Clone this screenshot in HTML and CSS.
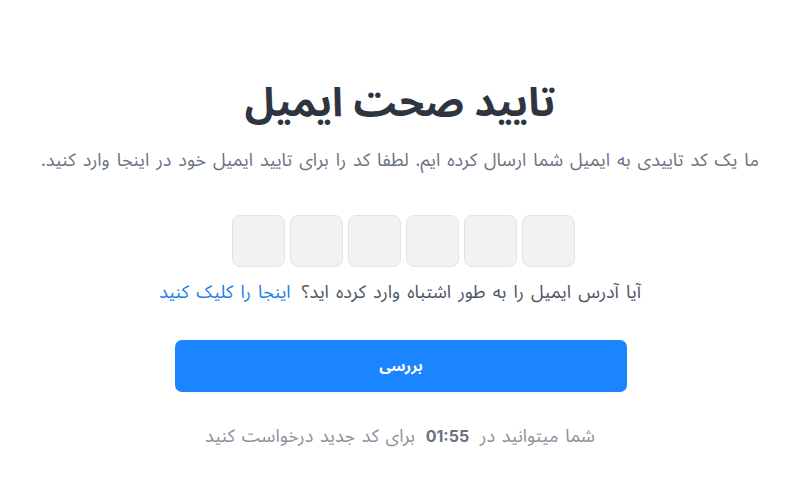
FILE: index.html
```html
<!DOCTYPE html>
<html lang="fa" dir="rtl">
<head>
<meta charset="utf-8">
<link rel="stylesheet" href="styles.css">
</head>
<body>
<main class="page">
  <h1 class="title">تایید صحت ایمیل</h1>
  <p class="subtitle">ما یک کد تاییدی به ایمیل شما ارسال کرده ایم. لطفا کد را برای تایید ایمیل خود در اینجا وارد کنید.</p>
  <div class="code" dir="ltr">
    <input class="digit" maxlength="1">
    <input class="digit" maxlength="1">
    <input class="digit" maxlength="1">
    <input class="digit" maxlength="1">
    <input class="digit" maxlength="1">
    <input class="digit" maxlength="1">
  </div>
  <p class="wrong">آیا آدرس ایمیل را به طور اشتباه وارد کرده اید؟ <a class="link" href="#">اینجا را کلیک کنید</a></p>
  <button class="submit">بررسی</button>
  <p class="timer">شما میتوانید در <b class="time">01:55</b> برای کد جدید درخواست کنید</p>
</main>
</body>
</html>
```

FILE: styles.css
```css
html, body {
  margin: 0;
  padding: 0;
  background: #ffffff;
}
body {
  font-family: "Noto Sans Arabic", "Noto Sans", sans-serif;
  width: 800px;
  height: 488px;
  overflow: hidden;
}
.page {
  display: flex;
  flex-direction: column;
  align-items: center;
  padding-top: 78px;
}
.title {
  margin: 0;
  font-size: 40px;
  line-height: 52px;
  font-weight: 700;
  color: #2e3440;
}
.subtitle {
  margin: 17px 0 0;
  font-size: 18px;
  line-height: 26px;
  word-spacing: 2.3px;
  color: #6b7280;
  white-space: nowrap;
}
.code {
  display: flex;
  gap: 5px;
  margin-top: 42px;
  margin-left: 6px;
}
.digit {
  width: 53px;
  height: 52px;
  box-sizing: border-box;
  border: 1px solid #e2e4e8;
  border-radius: 8px;
  background: #f1f2f4;
  outline: none;
  padding: 0;
}
.wrong {
  margin: 12px 0 0;
  font-size: 18px;
  line-height: 26px;
  word-spacing: 2.5px;
  color: #4b5563;
  white-space: nowrap;
}
.link {
  color: #1d7ee8;
  text-decoration: none;
  margin-right: 4px;
}
.submit {
  margin: 35px 0 0 2px;
  width: 452px;
  height: 52px;
  border: none;
  border-radius: 7px;
  background: #1a85ff;
  color: #ffffff;
  font-family: inherit;
  font-size: 15px;
  font-weight: 700;
}
.timer {
  margin: 31px 0 0;
  font-size: 18px;
  line-height: 26px;
  word-spacing: 2px;
  color: #8b929b;
  white-space: nowrap;
}
.time {
  font-family: "Inter", "Noto Sans", sans-serif;
  font-size: 16px;
  color: #6b7280;
  margin: 0 4px;
}
```
